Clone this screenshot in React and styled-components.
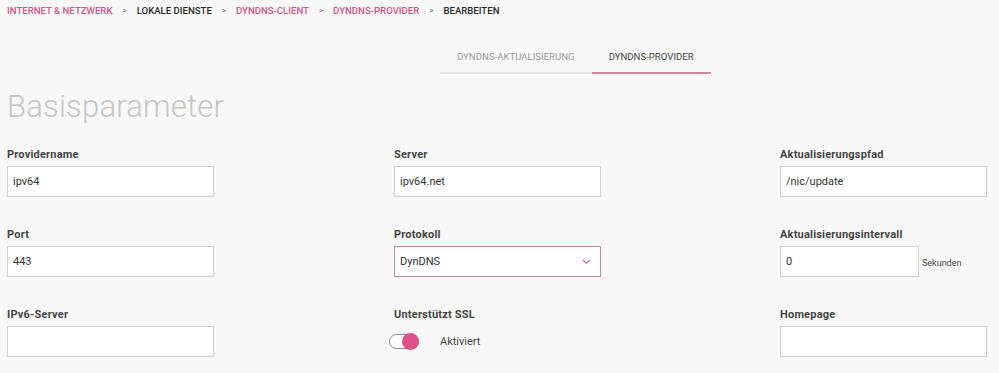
import React from "react";
import styled, { createGlobalStyle } from "styled-components";

const GlobalStyle = createGlobalStyle`
  body {
    margin: 0;
    background: #f8f8f8;
    font-family: Roboto, "Liberation Sans", sans-serif;
    color: #333;
  }
`;

const PINK = "#d2558c";

const fields = [
  { label: "Providername", value: "ipv64" },
  { label: "Server", value: "ipv64.net" },
  { label: "Aktualisierungspfad", value: "/nic/update" },
  { label: "Port", value: "443" },
  { label: "Protokoll", value: "DynDNS", kind: "select" },
  { label: "Aktualisierungsintervall", value: "0", kind: "unit", unit: "Sekunden" },
  { label: "IPv6-Server", value: "" },
  { label: "Unterstützt SSL", kind: "toggle", text: "Aktiviert" },
  { label: "Homepage", value: "" },
];

const App = () => {
  return (
    <Page>
      <GlobalStyle />
      <Crumbs>
        <Crumb $link>INTERNET &amp; NETZWERK</Crumb>
        <Sep>&gt;</Sep>
        <Crumb>LOKALE DIENSTE</Crumb>
        <Sep>&gt;</Sep>
        <Crumb $link>DYNDNS-CLIENT</Crumb>
        <Sep>&gt;</Sep>
        <Crumb $link>DYNDNS-PROVIDER</Crumb>
        <Sep>&gt;</Sep>
        <Crumb>BEARBEITEN</Crumb>
      </Crumbs>
      <Tabs>
        <Tab>DYNDNS-AKTUALISIERUNG</Tab>
        <Tab $active>DYNDNS-PROVIDER</Tab>
      </Tabs>
      <Title>Basisparameter</Title>
      <Grid>
        {fields.map((f) => (
          <Field key={f.label}>
            <Label>{f.label}</Label>
            {f.kind === "select" && (
              <Select>
                <span>{f.value}</span>
                <svg width="9" height="5" viewBox="0 0 9 5">
                  <path d="M0.8 0.8l3.7 3.4 3.7-3.4" fill="none" stroke={PINK} strokeWidth="1.1" />
                </svg>
              </Select>
            )}
            {f.kind === "unit" && (
              <UnitRow>
                <Input $w="139px">{f.value}</Input>
                <Unit>{f.unit}</Unit>
              </UnitRow>
            )}
            {f.kind === "toggle" && (
              <ToggleRow>
                <Track>
                  <Knob />
                </Track>
                <ToggleText>{f.text}</ToggleText>
              </ToggleRow>
            )}
            {!f.kind && <Input>{f.value}</Input>}
          </Field>
        ))}
      </Grid>
    </Page>
  );
};

export default App;

const Page = styled.div`
  width: 999px;
  height: 373px;
  overflow: hidden;
  padding: 0 0 0 7px;
  box-sizing: border-box;
`;

const Crumbs = styled.div`
  display: flex;
  align-items: center;
  height: 21px;
  font-size: 9.6px;
  font-weight: 500;
`;

const Crumb = styled.span`
  color: ${(p) => (p.$link ? PINK : "#2a2a2a")};
`;

const Sep = styled.span`
  color: #777;
  font-size: 8px;
  margin: 0 10px;
`;

const Tabs = styled.div`
  display: flex;
  margin: 30px 0 0 433px;
`;

const Tab = styled.div`
  padding: 0 17px 10px;
  font-size: 9.6px;
  color: ${(p) => (p.$active ? "#444" : "#999")};
  border-bottom: 2px solid ${(p) => (p.$active ? "#c9899f" : "#e6e6e6")};
`;

const Title = styled.h1`
  margin: 13px 0 0;
  font-size: 31px;
  font-weight: 300;
  color: #c6c6c6;
  line-height: 40px;
  letter-spacing: 0.2px;
`;

const Grid = styled.div`
  display: grid;
  grid-template-columns: 387px 386px 1fr;
  grid-auto-rows: 80px;
  margin-top: 21px;
`;

const Field = styled.div`
  display: flex;
  flex-direction: column;
`;

const Label = styled.div`
  font-size: 11px;
  font-weight: 700;
  color: #444;
  letter-spacing: 0.2px;
  margin-bottom: 5px;
`;

const Input = styled.div`
  width: ${(p) => p.$w || "207px"};
  height: 31px;
  box-sizing: border-box;
  background: #fff;
  border: 1px solid #cfcfcf;
  padding: 0 5px;
  display: flex;
  align-items: center;
  font-size: 11px;
  color: #333;
`;

const Select = styled(Input)`
  border-color: #b98ca3;
  justify-content: space-between;
  padding-right: 9px;
`;

const UnitRow = styled.div`
  display: flex;
  align-items: center;
  gap: 3px;
`;

const Unit = styled.span`
  font-size: 9px;
  color: #444;
  padding-top: 2px;
`;

const ToggleRow = styled.div`
  display: flex;
  align-items: center;
  height: 31px;
  margin-left: -5px;
`;

const Track = styled.div`
  position: relative;
  width: 28px;
  height: 13px;
  border: 1px solid #888;
  border-radius: 8px;
  background: #fff;
`;

const Knob = styled.div`
  position: absolute;
  right: -1px;
  top: -2px;
  width: 17px;
  height: 17px;
  border-radius: 50%;
  background: #e0508a;
`;

const ToggleText = styled.span`
  margin-left: 21px;
  font-size: 11px;
  color: #444;
`;
